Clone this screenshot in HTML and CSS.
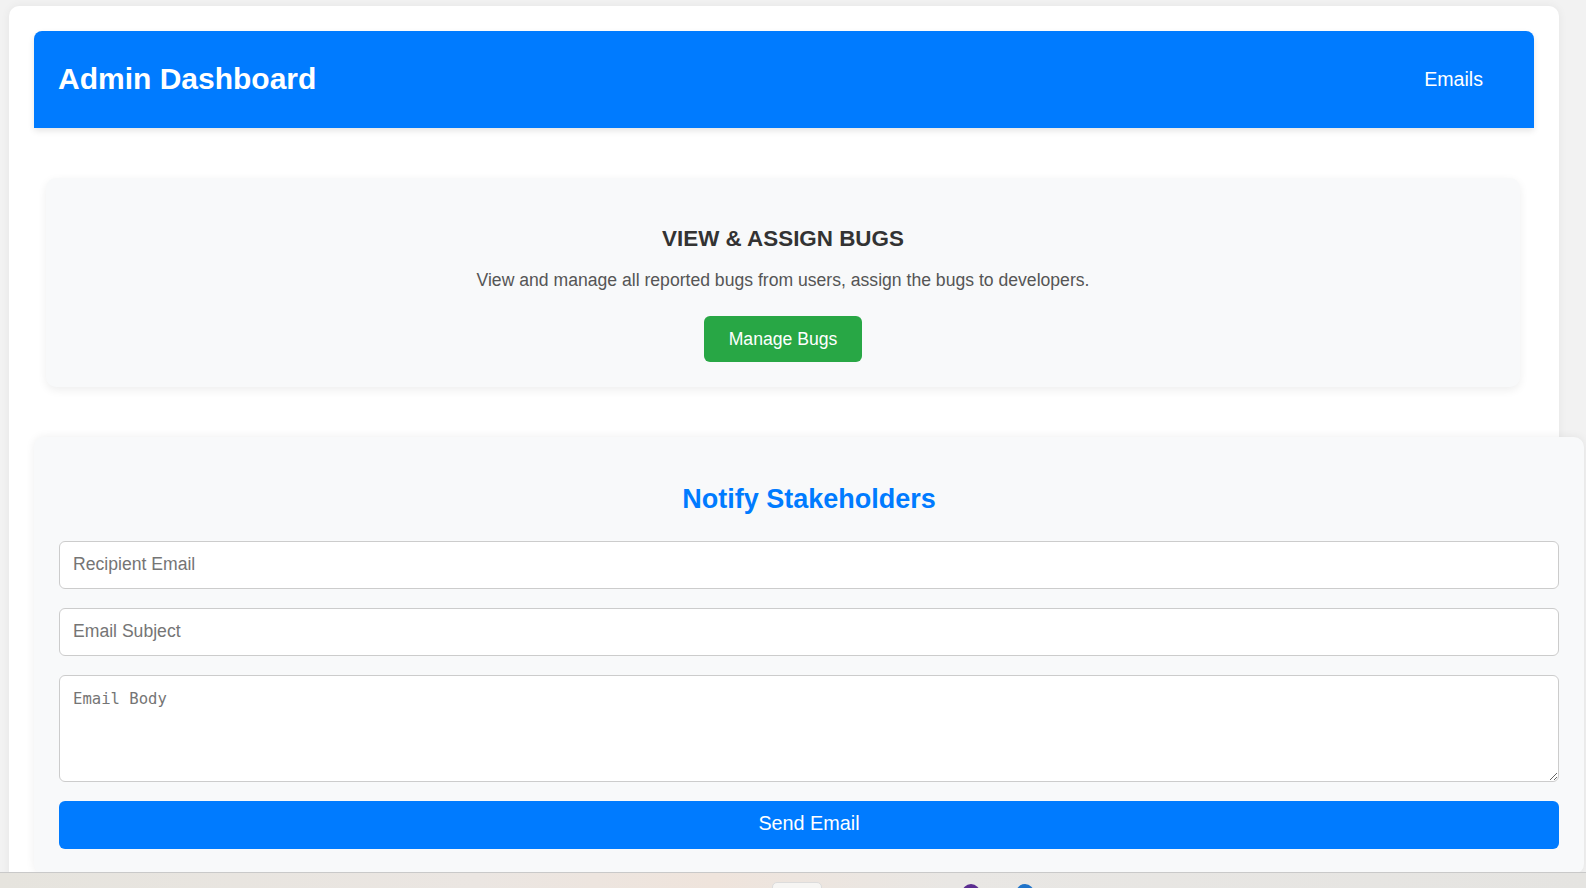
FILE: index.html
```html
<!DOCTYPE html>
<html lang="en">
<head>
<meta charset="utf-8">
<title>Admin Dashboard</title>
<link rel="stylesheet" href="styles.css">
</head>
<body>
<div class="container">
  <header class="topbar">
    <h1 class="title">Admin Dashboard</h1>
    <nav class="nav"><a class="nav-link" href="#">Emails</a></nav>
  </header>

  <section class="bug-card">
    <h2 class="bug-title">VIEW &amp; ASSIGN BUGS</h2>
    <p class="bug-desc">View and manage all reported bugs from users, assign the bugs to developers.</p>
    <a class="btn-green" href="#">Manage Bugs</a>
  </section>

  <section class="notify">
    <h2 class="notify-title">Notify Stakeholders</h2>
    <form class="notify-form">
      <input class="field" type="email" placeholder="Recipient Email">
      <input class="field" type="text" placeholder="Email Subject">
      <textarea class="area" placeholder="Email Body"></textarea>
      <button class="btn-send" type="button">Send Email</button>
    </form>
  </section>
</div>

<div class="taskbar">
  <span class="tb-box"></span>
  <span class="tb-dot tb-purple"></span>
  <span class="tb-dot tb-blue"></span>
</div>
</body>
</html>
```

FILE: styles.css
```css
html, body {
  margin: 0;
  padding: 0;
}
body {
  background: #f2f2f2;
  font-family: "Liberation Sans", Arial, sans-serif;
  height: 888px;
  overflow: hidden;
}

.container {
  margin: 6px 0 0 9px;
  width: 1500px;
  padding: 25px 25px 0 25px;
  background: #ffffff;
  border-radius: 10px;
  box-shadow: 0 0 10px rgba(0, 0, 0, 0.06);
  min-height: 900px;
}

.topbar {
  height: 97px;
  background: #007bff;
  border-radius: 8px 8px 0 0;
  box-shadow: 0 3px 6px rgba(0, 0, 0, 0.1);
  display: flex;
  align-items: center;
  justify-content: space-between;
  padding: 0 29px 0 24px;
  box-sizing: border-box;
}
.title {
  margin: 0;
  color: #ffffff;
  font-size: 30px;
  font-weight: bold;
  line-height: 1.15;
}
.nav-link {
  color: #ffffff;
  text-decoration: none;
  font-size: 19.6px;
  padding: 8px 22px;
}

.bug-card {
  margin: 50px 14px 0 12px;
  background: #f8f9fa;
  border-radius: 10px;
  box-shadow: 0 3px 10px rgba(0, 0, 0, 0.07);
  padding: 48px 20px 25px;
  text-align: center;
}
.bug-title {
  margin: 0;
  font-size: 22.4px;
  font-weight: bold;
  line-height: 1.15;
  color: #333333;
}
.bug-desc {
  margin: 18.5px 0 0;
  font-size: 17.6px;
  line-height: 1.15;
  color: #555555;
}
.btn-green {
  display: inline-block;
  margin-top: 26px;
  height: 46px;
  line-height: 46px;
  padding: 0 25px;
  background: #28a745;
  color: #ffffff;
  font-size: 17.6px;
  text-decoration: none;
  border-radius: 6px;
}

.notify {
  margin-top: 50px;
  width: 100%;
  padding: 25px 25px 25px;
  background: #f8f9fa;
  border-radius: 10px;
  box-shadow: 0 0 10px rgba(0, 0, 0, 0.07);
}
.notify-title {
  margin: 22px 0 0;
  text-align: center;
  color: #007bff;
  font-size: 27px;
  font-weight: bold;
  line-height: 1.15;
}
.notify-form {
  margin-top: 25px;
  display: flex;
  flex-direction: column;
  gap: 19px;
}
.field {
  display: block;
  box-sizing: border-box;
  width: 100%;
  height: 48px;
  margin: 0;
  padding: 0 13px;
  border: 1px solid #cccccc;
  border-radius: 6px;
  background: #ffffff;
  font-family: "Liberation Sans", Arial, sans-serif;
  font-size: 17.6px;
  color: #333333;
}
.field::placeholder {
  color: #757575;
}
.area {
  display: block;
  box-sizing: border-box;
  width: 100%;
  height: 107px;
  margin: 0;
  padding: 14px 13px 13px;
  border: 1px solid #cccccc;
  border-radius: 6px;
  background: #ffffff;
  font-family: "DejaVu Sans Mono", "Liberation Mono", monospace;
  font-size: 15.6px;
  color: #333333;
}
.area::placeholder {
  color: #757575;
}
.btn-send {
  display: block;
  width: 100%;
  height: 48px;
  margin: 0;
  padding: 0 0 3px;
  border: none;
  border-radius: 6px;
  background: #007bff;
  color: #ffffff;
  font-family: "Liberation Sans", Arial, sans-serif;
  font-size: 19.8px;
  cursor: pointer;
}

.taskbar {
  position: fixed;
  left: 0;
  right: 0;
  bottom: 0;
  height: 15px;
  background: linear-gradient(90deg, #e6e4de 0%, #ebe6e2 30%, #efe4dc 45%, #e9e7e4 60%, #e5e4e1 100%);
  border-top: 1px solid #c9c9c9;
  overflow: hidden;
}
.tb-box {
  position: absolute;
  left: 772px;
  top: 9px;
  width: 48px;
  height: 20px;
  background: #f6f5f3;
  border-radius: 5px;
  border: 1px solid #dcdcdc;
}
.tb-dot {
  position: absolute;
  top: 11px;
  width: 18px;
  height: 18px;
  border-radius: 50%;
}
.tb-purple {
  left: 962px;
  background: #5b2d90;
}
.tb-blue {
  left: 1016px;
  background: #1f73c9;
}
```
